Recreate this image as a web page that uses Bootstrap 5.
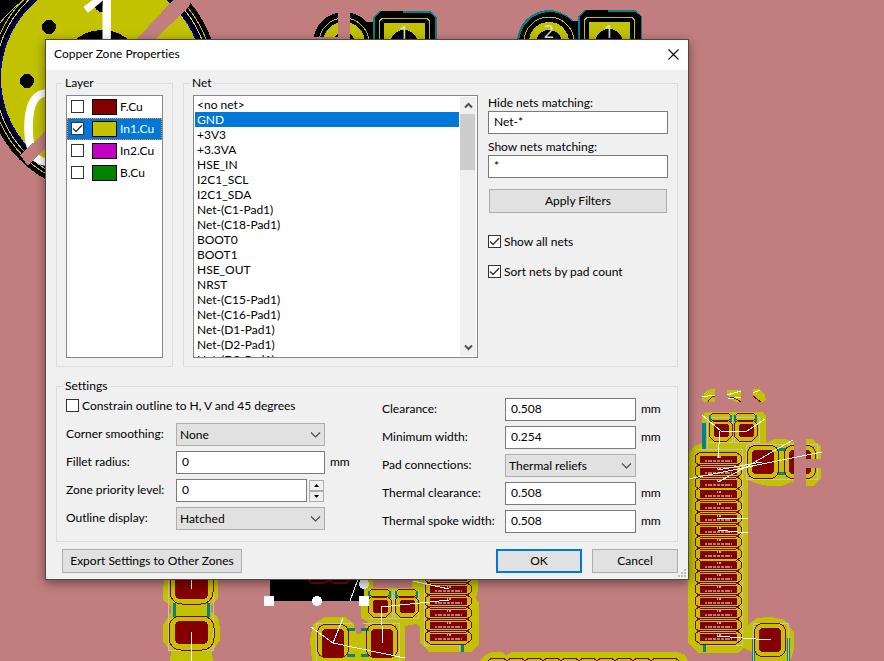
<!DOCTYPE html>
<html lang="en">
<head>
<meta charset="utf-8">
<meta name="viewport" content="width=device-width, initial-scale=1">
<title>Copper Zone Properties</title>
<link href="https://cdn.jsdelivr.net/npm/bootstrap@5.3.0/dist/css/bootstrap.min.css" rel="stylesheet">
<style>
  :root { --face:#f0f0f0; --line:#dcdcdc; --edge:#7a7a7a; --accent:#0078d7; }
  body { background:#c27e7e; font-family:Lato,"Open Sans",sans-serif; font-size:12px; line-height:15px; color:#000; font-variant-ligatures:none; }
  .board { position:absolute; inset:0; width:100%; height:100%; z-index:0; }
  .workspace { padding:39px 46px 0 45px; }
  .zone-dialog { position:relative; z-index:1; width:100%; max-width:644px; background:var(--face); border:1px solid #5b4444; box-shadow:0 3px 10px rgba(0,0,0,.45); }
  .title-bar { height:30px; background:#fff; padding:0 7px 0 8px; }
  .title-bar h1 { font-size:12px; line-height:15px; font-weight:400; }
  .close-btn { width:15px; height:15px; border:0; background:none; padding:0; }
  .dialog-body { padding:6px 10px; }
  .group { border:1px solid var(--line); padding:5px 9px 8px; min-width:0; }
  .group legend { float:none; width:auto; font-size:12px; line-height:14px; margin:0 0 0 -3px; padding:0 2px; }
  .group-layer { width:117px; }
  .group-net { margin-left:10px; }
  .list-panel { height:263px; background:#fff; border:1px solid #828790; overflow:hidden; }
  .layer-row { height:22px; padding:0 3px 1px; border:1px dotted transparent; }
  .layer-row.active-row { background:var(--accent); color:#fff; border-color:#ff8728; }
  .swatch { width:25px; height:16px; border:1px solid #000; margin:0 3px 0 8px; flex:none; }
  .c-front { background:#840000; } .c-in1 { background:#c2c200; } .c-in2 { background:#c200c2; } .c-back { background:#008400; }
  .form-check-input.tick { width:13px; height:13px; margin:0; border:1px solid #333; border-radius:0; background-color:#fff; background-size:13px 13px; flex:none; float:none; box-shadow:none; }
  .form-check-input.tick:checked { border-color:#333; background-color:#fff; background-image:url("data:image/svg+xml,%3csvg xmlns='http://www.w3.org/2000/svg' viewBox='0 0 13 13'%3e%3cpath fill='none' stroke='%23333' stroke-width='1.4' d='M2 6.5 5 9.5 11 3.2'/%3e%3c/svg%3e"); }
  .tick-text { margin-left:3px; white-space:nowrap; }
  .net-panel { width:285px; padding:1px; }
  .net-list { margin:0 1px 0 0; }
  .net-list li { height:15px; padding:0 2px; white-space:nowrap; }
  .net-list li[aria-selected=true] { background:var(--accent); color:#fff; }
  .scroll-track { width:16px; background:var(--face); flex:none; }
  .scroll-track button { display:flex; width:16px; height:17px; border:0; padding:0; background:none; align-items:center; justify-content:center; }
  .scroll-thumb { width:15px; height:56px; background:#cdcdcd; }
  .filters { margin:0 0 -8px 10px; }
  .filters .form-label { margin:0 0 1px; line-height:15px; }
  .filters .second { margin-top:5px; }
  .apply { margin:11px 1px 0; }
  .all-nets { height:15px; margin-top:21px; }
  .sort-nets { height:15px; margin-top:15px; }
  .field { height:23px; border:1px solid var(--edge); border-radius:0; font-size:12px; line-height:15px; padding:0 5px 2px; color:#000; background-color:#fff; min-height:0; }
  .form-select.field { border-color:#adadad; background-color:#e1e1e1; padding:0 20px 0 3px; background-position:right 3px center; background-size:11px 11px;
    background-image:url("data:image/svg+xml,%3csvg xmlns='http://www.w3.org/2000/svg' viewBox='0 0 11 11'%3e%3cpath fill='none' stroke='%23444' stroke-width='1.1' d='M1 3.5 5.5 8 10 3.5'/%3e%3c/svg%3e"); }
  .push { height:24px; border:1px solid #adadad; border-radius:0; background:#e1e1e1; font-size:12px; line-height:15px; padding:0 2px 1px; color:#000; }
  .push-main { border:2px solid var(--accent); }
  .push-std { width:86px; }
  .push-wide { width:180px; white-space:nowrap; }
  .settings-cols { display:grid; grid-template-columns:316px 1fr; }
  .setting { display:grid; column-gap:5px; align-items:center; height:23px; margin-bottom:5px; white-space:nowrap; }
  .setting label, .setting span { padding-bottom:2px; }
  .setting:last-child { margin-bottom:0; }
  .setting.s-left { grid-template-columns:105px 149px 1fr; }
  .setting.s-right { grid-template-columns:118px 131px 1fr; }
  .constrain { height:15px; margin-bottom:10px; }
  .spin { gap:2px; padding-right:1px; }
  .spin button { display:flex; width:15px; height:11px; padding:0; border:1px solid #adadad; background:var(--face); align-items:center; justify-content:center; }
  .actions { margin-top:7px; padding-left:6px; }
  .cancel { margin-left:10px; }
  .grip { position:absolute; right:2px; bottom:2px; width:8px; height:8px; }
</style>
<script src="https://cdn.jsdelivr.net/npm/bootstrap@5.3.0/dist/js/bootstrap.bundle.min.js"></script>
</head>
<body class="vh-100 overflow-hidden position-relative">
<svg class="board" viewBox="0 0 884 661" preserveAspectRatio="xMinYMin slice" shape-rendering="crispEdges" aria-hidden="true">
  <defs>
    <g id="pin">
      <path d="M5 -7H41L46 -3V3L41 7H5L0 3V-3Z" fill="none" stroke="#840000"/>
      <rect x="5" y="-3" width="37" height="7" fill="#840000"/>
      <path d="M22 -2h4" stroke="#c79c9c" stroke-width="2" stroke-dasharray="1 .6"/>
      <path d="M10 2H37" stroke="#b67c7c" stroke-width="2" stroke-dasharray="2 .6 1 .4 3 .8"/>
    </g>
    <g id="smallpad">
      <path d="M5 -5H20L24 -1L20 3H5L1 -1ZM5 2H20L24 6V18L19 23H6L1 18V6Z" fill="none" stroke="#840000"/>
      <rect x="6" y="6" width="15" height="13" rx="3" fill="#840000"/>
      <path d="M1 -3h2v7H1zM22 -3h2v7h-2z" fill="#008484"/>
    </g>
    <g id="bigpad">
      <rect x=".5" y=".5" width="31" height="33" rx="8" fill="none" stroke="#840000"/>
      <rect x="5" y="5" width="22" height="24" rx="4" fill="#840000"/>
    </g>
  </defs>

  <!-- large round connector pad -->
  <path d="M0 0H60V60H0Z"/>
  <circle cx="102" cy="78" r="116"/>
  <circle cx="102" cy="78" r="111" fill="none" stroke="#c2c200"/>
  <circle cx="102" cy="78" r="107" fill="none" stroke="#c2c2c2"/>
  <circle cx="102" cy="78" r="102" fill="#c2c200" stroke="#000084" stroke-width="2"/>
  <path d="M0 23Q10 10 24 0" fill="none" stroke="#c2c200"/>
  <circle cx="102" cy="72" r="42"/><circle cx="49" cy="27" r="7"/><circle cx="27" cy="81" r="7"/><circle cx="102" cy="4" r="8"/>
  <g fill="#fff" font-family="Open Sans, Noto Sans, sans-serif" font-size="105">
    <text x="74" y="66">1</text><text x="19" y="165">0</text>
  </g>
  <path d="M173 0H192L188 8L154 40H136ZM46 131L20 155L28 166L46 147Z" fill="#c27e7e"/>

  <!-- header pads -->
  <circle cx="344" cy="43" r="31"/><path d="M360 22H380V40H360Z"/>
  <circle cx="344" cy="43" r="25" fill="none" stroke="#c2c200"/><circle cx="344" cy="43" r="21" fill="#c2c200"/><circle cx="344" cy="43" r="11"/>
  <path d="M338 10H350V40H338ZM310 37H338V40H310Z" fill="#c27e7e"/>
  <path d="M373 17L379 11H431L437 18V40H373Z" fill="#008484"/>
  <path d="M375 17L381 11H403V13H430L435 17V40H375Z"/>
  <path d="M379.500 40V21L382 18.500H427L429.500 21V40" fill="none" stroke="#c2c200"/>
  <path d="M384 23H425V40H384Z" fill="#c2c200"/><circle cx="404" cy="44" r="14"/>
  <circle cx="549" cy="42" r="32" fill="#008484"/><circle cx="550" cy="43" r="31"/><path d="M570 21H580V40H570Z"/>
  <circle cx="549" cy="42" r="25" fill="none" stroke="#c2c200"/><circle cx="549" cy="42" r="20" fill="#c2c200"/><circle cx="549" cy="43" r="13"/>
  <path d="M578 16L584 10H636L642 17V40H578Z" fill="#008484"/>
  <path d="M580 16L586 10H608V12H635L641 16V40H580Z"/>
  <path d="M584.500 40V20L587 17.500H632L634.500 20V40" fill="none" stroke="#c2c200"/>
  <path d="M589 22H630V40H589Z" fill="#c2c200"/><circle cx="609" cy="43" r="14"/>
  <g fill="#e4e4e4" font-family="Open Sans, Noto Sans, sans-serif" font-size="18" text-anchor="middle">
    <text x="404" y="39">1</text><text x="549" y="38">2</text><text x="609" y="38">1</text>
  </g>

  <!-- right hand connector -->
  <g fill="#c2c200">
    <path d="M702 397L706 391L711 389H715V402H704L702 400ZM727 390H741V402H736L732 400L727 395ZM753 389H760L765 395L766 400L763 402H760L753 394Z"/>
    <path d="M702 415L706 412H762L766 416V443L774 439H786L792 442L798 439H812L821 446V478L813 486H800L792 482L782 486H768L758 484L748 480V625L757 618L770 617L785 620L794 633V650L790 661H752V652L744 648L738 653H698L688 643V455L694 446L702 443Z"/>
  </g>
  <path d="M794 430H806V490H794ZM806 459H824V468H806Z" fill="#c27e7e"/>
  <path d="M702 423h4v27h-4zM703 645h3v7h-3zM777 448h9v3h-9zM777 472h9v3h-9zM752 639h3v22h-3zM787 638h3v23h-3z" fill="#008484"/>
  <path d="M707.500 449V417.500H732V442H709M734.500 442V417.500H759.500V442ZM746.500 444.500H794M806 444.500H817V459M817 468V479.500H806M794 479.500H746.500V444.500M706 645.500H742.500V449.500H697M753.500 661V623.500H788V661" fill="none" stroke="#c2c2c2"/>
  <use href="#smallpad" x="708" y="418"/><use href="#smallpad" x="733" y="418"/>
  <use href="#bigpad" x="747" y="445"/><use href="#bigpad" x="784" y="445"/>
  <path d="M794 444H806V480H794ZM806 459H817V468H806Z" fill="#c27e7e"/>
  <use href="#bigpad" x="754" y="623"/>
  <g>
    <use href="#pin" x="695" y="459"/><use href="#pin" x="695" y="471"/><use href="#pin" x="695" y="483"/><use href="#pin" x="695" y="494"/>
    <use href="#pin" x="695" y="506"/><use href="#pin" x="695" y="518"/><use href="#pin" x="695" y="530"/><use href="#pin" x="695" y="542"/>
    <use href="#pin" x="695" y="554"/><use href="#pin" x="695" y="565"/><use href="#pin" x="695" y="577"/><use href="#pin" x="695" y="589"/>
    <use href="#pin" x="695" y="601"/><use href="#pin" x="695" y="613"/><use href="#pin" x="695" y="625"/><use href="#pin" x="695" y="637"/>
  </g>
  <path d="M708 402Q710 397 715 396M728 399L733 397L741 402M753 396L761 402" fill="none" stroke="#840000"/>
  <path d="M702 397L715 395M727 395L741 391M728 399L741 397M753 393L760 390M702 415L721 431H747L765 419M720 431L718 458M688 479L822 452M718 470L762 462M718 482L746 467L793 440M717 518H748M718 530L748 533M717 636L756 639H771" fill="none" stroke="#fff"/>

  <!-- lower left pads -->
  <path d="M164 570H218V598L211 606V612L218 617L220 628V640L212 652L213 661H170L171 652L163 641V625L171 612V606L163 600Z" fill="#c2c200"/>
  <path d="M173 603h3v14h-3zM207 603h3v14h-3z" fill="#008484"/>
  <path d="M168.500 570V650.500H213.500V570" fill="none" stroke="#c2c2c2"/>
  <rect x="170" y="565" width="43" height="39" rx="12" fill="none" stroke="#840000"/><rect x="175" y="570" width="33" height="29" rx="5" fill="#840000"/>
  <rect x="169" y="616" width="45" height="34" rx="12" fill="none" stroke="#840000"/><rect x="175" y="621" width="33" height="23" rx="5" fill="#840000"/>
  <path d="M191.500 575V589M191.500 632V661" stroke="#fff"/>

  <!-- lower centre parts -->
  <path d="M361 575H478V590L476 598L479 603V644L472 652H430L420 643V628L416 624L405 626V661H312L310 640L313 624L325 617H345L353 623L357 634H361L368 622L361 618Z" fill="#c2c200"/>
  <path d="M355 606L361 606V618L365 624L361 634H357L353 623Z" fill="#c27e7e"/>
  <path d="M347 628h8v3h-8zM361 628h8v3h-8zM347 654h8v3h-8zM361 654h8v3h-8zM461 645h3v7h-3z" fill="#008484"/>
  <path d="M316.500 661V623.500H352M363 623.500H399.500V661M424.500 570V645.500H459V651M369 618H392.500V590M394.500 590V618H418.500V590" fill="none" stroke="#c2c2c2"/>
  <path d="M373 575H412V588H373Z" fill="#c27e7e"/>
  <use href="#smallpad" x="367" y="594"/><use href="#smallpad" x="394" y="594"/>
  <use href="#bigpad" x="317" y="624"/><use href="#bigpad" x="366" y="624"/>
  <path d="M322 648H344V657H322ZM371 648H393V657H371Z" fill="#840000"/>
  <use href="#pin" x="425" y="577"/><use href="#pin" x="425" y="589"/><use href="#pin" x="425" y="601"/><use href="#pin" x="425" y="613"/><use href="#pin" x="425" y="625"/><use href="#pin" x="425" y="637"/>
  <path d="M270 570H364V601H270Z"/>
  <path d="M307 578L311 582.500H325L329 579L333 582.500H347L351 578" fill="none" stroke="#840000" stroke-width="2"/>
  <path d="M358 579L350 601M311 627L333 643L405 658M343 618L333 643M383 643L381 607L449 600M413 581L449 589" fill="none" stroke="#fff"/>
  <path d="M264 596h10v10h-10zM359 596h10v10h-10z" fill="#fff"/><circle cx="317" cy="601" r="5" fill="#fff"/><circle cx="364" cy="584" r="5" fill="#eee"/>
  <path d="M480 661L486 654L492 652H502L506 655L512 652H678L685 655L688 661Z" fill="#c2c200"/>
  <path d="M488 661L491 658.500H504L507 661L510 658.500H522L525 661L528 658.500H540L543 661L546 658.500H558L561 661L564 658.500H576L579 661L582 658.500H594L597 661L600 658.500H612L615 661L618 658.500H630L633 661L636 658.500H648L651 661L654 658.500H676L679 661" fill="none" stroke="#840000"/>
</svg>

<main class="workspace">
<form class="zone-dialog" onsubmit="return false">
  <header class="title-bar d-flex align-items-center justify-content-between">
    <h1 class="m-0 pb-1">Copper Zone Properties</h1>
    <button type="button" class="close-btn" aria-label="Close"><svg class="d-block" width="15" height="15" viewBox="0 0 15 15"><path d="M2.500 1.500 12.500 11.500M12.500 1.500 2.500 11.500" stroke="#000" stroke-width="1.100"/></svg></button>
  </header>

  <div class="dialog-body">
    <div class="d-flex mb-2 pb-1">
      <fieldset class="group group-layer flex-shrink-0">
        <legend>Layer</legend>
        <div class="list-panel">
          <label class="layer-row d-flex align-items-center"><input type="checkbox" class="form-check-input tick"><span class="swatch c-front"></span>F.Cu</label>
          <label class="layer-row active-row d-flex align-items-center"><input type="checkbox" class="form-check-input tick" checked><span class="swatch c-in1"></span>In1.Cu</label>
          <label class="layer-row d-flex align-items-center"><input type="checkbox" class="form-check-input tick"><span class="swatch c-in2"></span>In2.Cu</label>
          <label class="layer-row d-flex align-items-center"><input type="checkbox" class="form-check-input tick"><span class="swatch c-back"></span>B.Cu</label>
        </div>
      </fieldset>

      <fieldset class="group group-net flex-grow-1">
        <legend>Net</legend>
        <div class="d-flex">
          <div class="list-panel net-panel d-flex flex-shrink-0">
            <ul class="net-list list-unstyled flex-grow-1" role="listbox" aria-label="Net">
              <li role="option">&lt;no net&gt;</li>
              <li role="option" aria-selected="true">GND</li>
              <li role="option">+3V3</li>
              <li role="option">+3.3VA</li>
              <li role="option">HSE_IN</li>
              <li role="option">I2C1_SCL</li>
              <li role="option">I2C1_SDA</li>
              <li role="option">Net-(C1-Pad1)</li>
              <li role="option">Net-(C18-Pad1)</li>
              <li role="option">BOOT0</li>
              <li role="option">BOOT1</li>
              <li role="option">HSE_OUT</li>
              <li role="option">NRST</li>
              <li role="option">Net-(C15-Pad1)</li>
              <li role="option">Net-(C16-Pad1)</li>
              <li role="option">Net-(D1-Pad1)</li>
              <li role="option">Net-(D2-Pad1)</li>
              <li role="option">Net-(D3-Pad1)</li>
            </ul>
            <div class="scroll-track d-flex flex-column">
              <button type="button" aria-label="Scroll up"><svg width="9" height="9" viewBox="0 0 9 9"><path d="M1 6.500 4.500 3 8 6.500" fill="none" stroke="#505050" stroke-width="2"/></svg></button>
              <div class="scroll-thumb"></div>
              <button type="button" class="mt-auto" aria-label="Scroll down"><svg width="9" height="9" viewBox="0 0 9 9"><path d="M1 2.500 4.500 6 8 2.500" fill="none" stroke="#505050" stroke-width="2"/></svg></button>
            </div>
          </div>
          <div class="filters flex-grow-1 d-flex flex-column">
            <label class="form-label" for="hide">Hide nets matching:</label>
            <input type="text" id="hide" class="form-control field" value="Net-*">
            <label class="form-label second" for="show">Show nets matching:</label>
            <input type="text" id="show" class="form-control field" value="*">
            <button type="button" class="push apply">Apply Filters</button>
            <label class="all-nets d-flex align-items-center"><input type="checkbox" class="form-check-input tick" checked><span class="tick-text">Show all nets</span></label>
            <label class="sort-nets d-flex align-items-center"><input type="checkbox" class="form-check-input tick" checked><span class="tick-text">Sort nets by pad count</span></label>
          </div>
        </div>
      </fieldset>
    </div>

    <fieldset class="group">
      <legend>Settings</legend>
      <div class="settings-cols">
        <div>
          <label class="constrain d-flex align-items-center"><input type="checkbox" class="form-check-input tick"><span class="tick-text">Constrain outline to H, V and 45 degrees</span></label>
          <div class="setting s-left"><label for="corner">Corner smoothing:</label><select id="corner" class="form-select field"><option>None</option></select></div>
          <div class="setting s-left"><label for="fillet">Fillet radius:</label><input type="text" id="fillet" class="form-control field" value="0"><span>mm</span></div>
          <div class="setting s-left"><label for="prio">Zone priority level:</label>
            <div class="spin d-flex align-items-center">
              <input type="text" id="prio" class="form-control field flex-grow-1" value="0">
              <div class="d-flex flex-column">
                <button type="button" aria-label="Increase"><svg width="5" height="3" viewBox="0 0 5 3"><path d="M0 3 2.500 0 5 3z"/></svg></button>
                <button type="button" aria-label="Decrease"><svg width="5" height="3" viewBox="0 0 5 3"><path d="M0 0 2.500 3 5 0z"/></svg></button>
              </div>
            </div>
          </div>
          <div class="setting s-left"><label for="outline">Outline display:</label><select id="outline" class="form-select field"><option>Hatched</option></select></div>
        </div>
        <div>
          <div class="setting s-right"><label for="clr">Clearance:</label><input type="text" id="clr" class="form-control field" value="0.508"><span>mm</span></div>
          <div class="setting s-right"><label for="minw">Minimum width:</label><input type="text" id="minw" class="form-control field" value="0.254"><span>mm</span></div>
          <div class="setting s-right"><label for="padc">Pad connections:</label><select id="padc" class="form-select field"><option>Thermal reliefs</option></select></div>
          <div class="setting s-right"><label for="thc">Thermal clearance:</label><input type="text" id="thc" class="form-control field" value="0.508"><span>mm</span></div>
          <div class="setting s-right"><label for="thw">Thermal spoke width:</label><input type="text" id="thw" class="form-control field" value="0.508"><span>mm</span></div>
        </div>
      </div>
    </fieldset>

    <div class="actions d-flex">
      <button type="button" class="push push-wide">Export Settings to Other Zones</button>
      <button type="submit" class="push push-main push-std ms-auto">OK</button>
      <button type="button" class="push push-std cancel">Cancel</button>
    </div>
  </div>
  <svg class="grip" viewBox="0 0 8 8" shape-rendering="crispEdges"><path d="M6 0h2v2H6zM6 3h2v2H6zM6 6h2v2H6zM3 3h2v2H3zM3 6h2v2H3zM0 6h2v2H0z" fill="#bcbcbc"/></svg>
</form>
</main>
</body>
</html>
